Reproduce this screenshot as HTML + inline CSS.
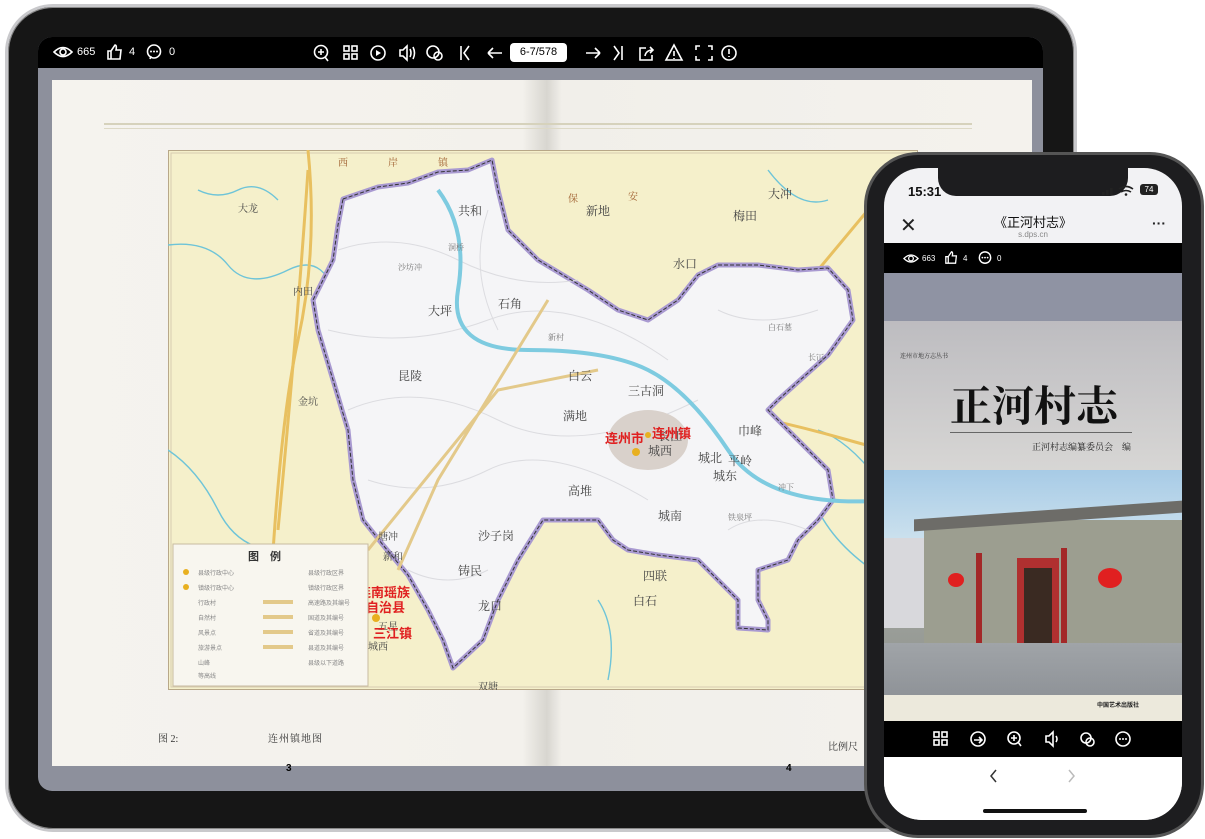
<!DOCTYPE html>
<html><head><meta charset="utf-8"><style>
*{margin:0;padding:0;box-sizing:border-box}
body{width:1205px;height:839px;background:#fff;position:relative;overflow:hidden;font-family:"Liberation Sans","Noto Sans CJK SC",sans-serif}
.abs{position:absolute}
.tb{left:5px;top:4px;width:1072px;height:828px;border-radius:48px;background:#161616;border:3px solid #c9c9cc;box-shadow:0 0 0 1px #888 inset}
.screen{left:38px;top:37px;width:1005px;height:754px;border-radius:14px;background:#8d909c;overflow:hidden}
.bar{left:0;top:0;width:100%;height:31px;background:#000;color:#fff;font-size:11px}
.page{left:14px;top:43px;width:980px;height:686px;background:linear-gradient(90deg,#f5f3ee 0%,#f3f1ec 48%,#d8d6d0 50.5%,#f1efea 52%,#f4f2ed 100%)}
.phone{left:864px;top:152px;width:340px;height:686px;border-radius:54px;background:#1d1d1f;border:3px solid #555}
.pscreen{left:884px;top:168px;width:298px;height:652px;border-radius:38px;overflow:hidden;background:#f2f2f4}
.ico{fill:none;stroke:#fff;stroke-width:1.6}
</style></head><body>
<div class="abs tb"></div>
<div class="abs screen">
 <div class="abs bar">
  <svg class="abs" style="left:15px;top:8px" width="20" height="14" viewBox="0 0 20 14"><path class="ico" d="M1 7Q10-2 19 7Q10 16 1 7Z"/><circle class="ico" cx="10" cy="7" r="3"/></svg>
  <span class="abs" style="left:39px;top:9px">665</span>
  <svg class="abs" style="left:69px;top:7px" width="16" height="16" viewBox="0 0 16 16"><path class="ico" d="M1 7h3v8H1zM4 7l4-6q2 0 1 5h5l-1 9H4"/></svg>
  <span class="abs" style="left:91px;top:9px">4</span>
  <svg class="abs" style="left:108px;top:7px" width="16" height="16" viewBox="0 0 16 16"><circle class="ico" cx="8" cy="7.5" r="6.5"/><path d="M4 15l1-3" class="ico"/><circle cx="5" cy="7.5" r="1" fill="#fff"/><circle cx="8" cy="7.5" r="1" fill="#fff"/><circle cx="11" cy="7.5" r="1" fill="#fff"/></svg>
  <span class="abs" style="left:131px;top:9px">0</span>
  <svg class="abs" style="left:274px;top:6px" width="440" height="20" viewBox="0 0 440 20">
   <circle class="ico" cx="9" cy="9" r="6.5"/><path class="ico" d="M6 9h6M9 6v6M13 14l3 4"/>
   <rect class="ico" x="32" y="3" width="5" height="5"/><rect class="ico" x="40" y="3" width="5" height="5"/><rect class="ico" x="32" y="11" width="5" height="5"/><rect class="ico" x="40" y="11" width="5" height="5"/>
   <circle class="ico" cx="66" cy="10" r="7"/><path d="M64 7v6l5-3z" fill="#fff"/>
   <path class="ico" d="M88 7h3l4-4v14l-4-4h-3zM98 6q2 4 0 8M101 4q3 6 0 12"/>
   <circle class="ico" cx="121" cy="9" r="6"/><circle class="ico" cx="126" cy="13" r="4"/>
   <path class="ico" d="M149 3v14M157 3l-5 7 5 7"/>
   <path class="ico" d="M176 10h14M176 10l5-5M176 10l5 5"/>
   <path class="ico" d="M274 10h14M288 10l-5-5M288 10l-5 5"/>
   <path class="ico" d="M302 3l5 7-5 7M310 3v14"/>
   <path class="ico" d="M334 5h-6v12h12v-5M333 13q1-6 8-6M338 4l3 3-3 3"/>
   <path class="ico" d="M362 2l8 15h-16zM362 8v5M362 15v1"/>
   <path class="ico" d="M384 7V3h4M396 3h4v4M400 13v4h-4M388 17h-4v-4"/>
   <circle class="ico" cx="417" cy="10" r="7"/><path class="ico" d="M417 6v5M417 13v1"/>
  </svg>
  <div class="abs" style="left:472px;top:6px;width:57px;height:19px;background:#fff;border-radius:4px;color:#000;font-size:11px;text-align:center;line-height:19px">6-7/578</div>
 </div>
 <div class="abs page">
  <div class="abs" style="left:52px;top:43px;width:868px;height:2px;background:#d6d2bc"></div>
  <div class="abs" style="left:52px;top:48px;width:868px;height:1px;background:#ddd9c6"></div>
  <svg class="abs" style="left:116px;top:70px" width="750" height="540" viewBox="0 0 750 540">
   <rect x="0" y="0" width="750" height="540" fill="#f5f0cb" stroke="#b8a888" stroke-width="2"/>
   <rect x="3" y="3" width="744" height="534" fill="none" stroke="#d8ccb0"/>
   <path d="M0 95 Q40 90 60 115 T120 120 T170 160 M30 40q20 10 40 0t40 10 M600 20q30 40 60 30 M590 300q40 20 60 60t70 70 M650 280q30 10 60 50 M0 300q30 20 50 60t60 40 M430 450q20 30 10 80" stroke="#6ec4d8" stroke-width="1.4" fill="none"/>
   <path d="M140 0q10 100-10 190t-30 300" stroke="#e8c060" stroke-width="3" fill="none"/>
   <path d="M455 240Q520 230 600 180L700 60 M550 260q60 10 130 30t70 10" stroke="#e8c060" stroke-width="3" fill="none"/>
   <polygon points="175,49 210,37 240,33 270,22 300,20 324,10 330,40 340,80 370,110 420,140 450,160 480,170 510,150 530,125 550,115 590,115 630,120 660,118 680,140 685,170 660,205 610,250 600,260 610,270 660,320 665,350 650,370 630,390 620,410 590,420 590,450 600,470 600,480 570,478 570,450 530,410 490,405 460,400 445,390 430,370 410,370 375,370 350,410 330,450 315,490 285,518 275,490 260,460 240,425 215,395 195,370 185,330 180,280 165,230 150,180 145,150 165,110 170,75" fill="#f5f5f7" stroke="#a99ad1" stroke-width="5" stroke-linejoin="round"/>
   <g stroke="#dcdce0" stroke-width="1" fill="none">
    <path d="M170 100q60-20 120 10t120 20M160 180q80 20 160-10t180 40M180 260q70-30 150 10t200-20M200 330q60 20 120-10t160 30M550 160q40 20 100 0M560 380q30-20 80 0M240 420q40 20 80 0M320 60q-20 60 10 120"/>
   </g>
   <polygon points="175,49 210,37 240,33 270,22 300,20 324,10 330,40 340,80 370,110 420,140 450,160 480,170 510,150 530,125 550,115 590,115 630,120 660,118 680,140 685,170 660,205 610,250 600,260 610,270 660,320 665,350 650,370 630,390 620,410 590,420 590,450 600,470 600,480 570,478 570,450 530,410 490,405 460,400 445,390 430,370 410,370 375,370 350,410 330,450 315,490 285,518 275,490 260,460 240,425 215,395 195,370 185,330 180,280 165,230 150,180 145,150 165,110 170,75" fill="none" stroke="#333" stroke-width="1" stroke-dasharray="4 2"/>
   <path d="M270 40q30 40 20 100t70 60 120 20 80 80 160 50" stroke="#7ecbe0" stroke-width="4" fill="none"/>
   <path d="M140 20q-10 150-30 360" stroke="#e8c060" stroke-width="3" fill="none"/>
   <path d="M380 150L270 330 230 420M200 400l130-160 100-20" stroke="#e3c98a" stroke-width="3" fill="none"/>
   <ellipse cx="480" cy="290" rx="40" ry="30" fill="#d9d1cb"/>
   <g font-family="Liberation Serif,'Noto Serif CJK SC',serif" font-size="10" fill="#444">
    <text x="70" y="62">大龙</text><text x="125" y="145">内田</text><text x="130" y="255">金坑</text>
    <text x="290" y="65" font-size="12">共和</text><text x="330" y="158" font-size="12">石角</text><text x="260" y="165" font-size="12">大坪</text>
    <text x="230" y="230" font-size="12">昆陵</text><text x="400" y="230" font-size="12">白云</text><text x="395" y="270" font-size="12">满地</text>
    <text x="460" y="245" font-size="12">三古洞</text><text x="490" y="290" font-size="12">长江</text><text x="570" y="285" font-size="12">巾峰</text>
    <text x="530" y="312" font-size="12">城北</text><text x="560" y="315" font-size="12">平岭</text><text x="480" y="305" font-size="12">城西</text>
    <text x="545" y="330" font-size="12">城东</text><text x="400" y="345" font-size="12">高堆</text><text x="490" y="370" font-size="12">城南</text>
    <text x="475" y="430" font-size="12">四联</text><text x="465" y="455" font-size="12">白石</text><text x="310" y="460" font-size="12">龙口</text>
    <text x="310" y="390" font-size="12">沙子岗</text><text x="290" y="425" font-size="12">铸民</text><text x="210" y="390">塘冲</text><text x="215" y="410">新和</text>
    <text x="200" y="500">城西</text><text x="210" y="480">五星</text><text x="505" y="118" font-size="12">水口</text><text x="565" y="70" font-size="12">梅田</text>
    <text x="600" y="48" font-size="12">大冲</text><text x="418" y="65" font-size="12">新地</text><text x="310" y="540">双塘</text><text x="460" y="50" fill="#a06030">安</text><text x="400" y="52" fill="#a06030">保</text>
    <text x="170" y="16" fill="#a06030">西</text><text x="220" y="16" fill="#a06030">岸</text><text x="270" y="16" fill="#a06030">镇</text>
    <text x="640" y="210" font-size="8" fill="#777">长冚</text><text x="600" y="180" font-size="8" fill="#777">白石墓</text><text x="380" y="190" font-size="8" fill="#777">新村</text><text x="230" y="120" font-size="8" fill="#777">沙坊冲</text><text x="280" y="100" font-size="8" fill="#777">洞桥</text><text x="560" y="370" font-size="8" fill="#777">铁泉坪</text><text x="610" y="340" font-size="8" fill="#777">冲下</text><text x="700" y="290" font-size="12">青石</text>
   </g>
   <g font-weight="bold" fill="#e02020" font-size="13" font-family="Liberation Sans,'Noto Sans CJK SC',sans-serif">
    <text x="437" y="293">连州市</text><text x="484" y="288">连州镇</text><text x="190" y="447">连南瑶族</text><text x="198" y="462">自治县</text><text x="205" y="488">三江镇</text>
   </g>
   <circle cx="480" cy="285" r="3" fill="#e8b020"/><circle cx="468" cy="302" r="4" fill="#e8b020"/><circle cx="208" cy="468" r="4" fill="#e8b020"/>
   <rect x="5" y="394" width="195" height="142" fill="#f8f6ef" stroke="#c8bba0"/>
   <text x="80" y="410" font-size="11" font-weight="bold" fill="#333">图　例</text>
   <g fill="#888" font-size="6"><text x="30" y="425">县级行政中心</text><text x="30" y="440">镇级行政中心</text><text x="30" y="455">行政村</text><text x="30" y="470">自然村</text><text x="30" y="485">风景点</text><text x="30" y="500">旅游景点</text><text x="30" y="515">山峰</text><text x="30" y="528">等高线</text>
   <text x="140" y="425">县级行政区界</text><text x="140" y="440">镇级行政区界</text><text x="140" y="455">高速路及其编号</text><text x="140" y="470">国道及其编号</text><text x="140" y="485">省道及其编号</text><text x="140" y="500">县道及其编号</text><text x="140" y="515">县级以下道路</text></g>
   <g fill="#e8b020"><circle cx="18" cy="422" r="3"/><circle cx="18" cy="437" r="3"/></g>
   <g stroke="#e3c98a" stroke-width="4"><path d="M95 452h30M95 467h30M95 482h30M95 497h30"/></g>
  </svg>
  <div class="abs" style="left:106px;top:650px;font-size:10px;color:#333;font-family:'Liberation Serif','Noto Serif CJK SC',serif">图 2:</div>
  <div class="abs" style="left:216px;top:650px;font-size:10px;color:#333;letter-spacing:1px;font-family:'Liberation Serif','Noto Serif CJK SC',serif">连州镇地图</div>
  <div class="abs" style="left:776px;top:658px;font-size:10px;color:#333;font-family:'Liberation Serif','Noto Serif CJK SC',serif">比例尺</div>
  <div class="abs" style="left:234px;top:683px;font-size:10px;font-weight:bold">3</div>
  <div class="abs" style="left:734px;top:683px;font-size:10px;font-weight:bold">4</div>
 </div>
</div>
<div class="abs phone"></div>
<div class="abs pscreen">
 <div class="abs" style="left:54px;top:0;width:190px;height:28px;background:#1d1d1f;border-radius:0 0 18px 18px"></div>
 <div class="abs" style="left:24px;top:16px;font-size:13px;font-weight:bold;color:#111">15:31</div>
 <div class="abs" style="left:256px;top:16px;width:18px;height:11px;background:#222;border-radius:3px;color:#fff;font-size:8px;text-align:center;line-height:11px">74</div>
 <svg class="abs" style="left:218px;top:17px" width="34" height="11"><rect x="0" y="7" width="2.5" height="3" fill="#222"/><rect x="4" y="5" width="2.5" height="5" fill="#222"/><rect x="8" y="3" width="2.5" height="7" fill="#222"/><path d="M17 4q7-5 14 0M19 7q5-3 10 0" stroke="#222" stroke-width="1.6" fill="none"/><circle cx="24" cy="9.5" r="1.3" fill="#222"/></svg>
 <div class="abs" style="left:16px;top:50px;font-size:20px;color:#222;line-height:16px">✕</div>
 <div class="abs" style="left:0;top:44px;width:298px;text-align:center;font-size:13px;color:#111">《正河村志》</div>
 <div class="abs" style="left:0;top:62px;width:298px;text-align:center;font-size:8px;color:#888">s.dps.cn</div>
 <div class="abs" style="left:268px;top:47px;font-size:14px;color:#222;font-weight:bold">···</div>
 <div class="abs" style="left:0;top:75px;width:298px;height:30px;background:#000;color:#fff;font-size:8px">
  <svg class="abs" style="left:19px;top:10px" width="16" height="11" viewBox="0 0 20 14"><path class="ico" d="M1 7Q10-2 19 7Q10 16 1 7Z"/><circle class="ico" cx="10" cy="7" r="3"/></svg>
  <span class="abs" style="left:38px;top:11px">663</span>
  <svg class="abs" style="left:61px;top:8px" width="13" height="13" viewBox="0 0 16 16"><path class="ico" d="M1 7h3v8H1zM4 7l4-6q2 0 1 5h5l-1 9H4"/></svg>
  <span class="abs" style="left:79px;top:11px">4</span>
  <svg class="abs" style="left:94px;top:8px" width="14" height="14" viewBox="0 0 16 16"><circle class="ico" cx="8" cy="7.5" r="6.5"/><circle cx="5" cy="7.5" r="1" fill="#fff"/><circle cx="8" cy="7.5" r="1" fill="#fff"/><circle cx="11" cy="7.5" r="1" fill="#fff"/></svg>
  <span class="abs" style="left:113px;top:11px">0</span>
 </div>
 <div class="abs" style="left:0;top:105px;width:298px;height:48px;background:#8f93a3"></div>
 <div class="abs" style="left:0;top:153px;width:298px;height:400px;background:linear-gradient(#bdbcc0,#d9d8d6 40%,#ebe9e2 100%)"></div>
 <div class="abs" style="left:16px;top:183px;font-size:6px;color:#333;font-family:'Liberation Serif','Noto Serif CJK SC',serif">连州市地方志丛书</div>
 <div class="abs" style="left:66px;top:212px;font-size:42px;font-weight:bold;color:#111;font-family:'Noto Serif CJK SC',serif;line-height:48px">正河村志</div>
 <div class="abs" style="left:66px;top:264px;width:182px;height:1px;background:#666"></div>
 <div class="abs" style="left:148px;top:272px;font-size:9px;color:#222;font-family:'Noto Serif CJK SC',serif">正河村志编纂委员会　编</div>
 <div class="abs" style="left:0;top:302px;width:298px;height:225px;background:linear-gradient(#a7cbe6,#d6e7f0 40%,#9ea29b 60%,#8e918f 100%)"></div>
 <div class="abs" style="left:40px;top:352px;width:258px;height:128px;background:#9c9e90"></div>
 <div class="abs" style="left:30px;top:342px;width:268px;height:12px;background:#6d6c68;transform:skewY(-4deg)"></div>
 <div class="abs" style="left:0;top:370px;width:40px;height:90px;background:#d8d8dc"></div>
 <div class="abs" style="left:133px;top:390px;width:42px;height:88px;background:#b03030"></div>
 <div class="abs" style="left:140px;top:400px;width:28px;height:78px;background:#3a2a22"></div>
 <div class="abs" style="left:92px;top:385px;width:6px;height:92px;background:#a32828"></div>
 <div class="abs" style="left:177px;top:380px;width:6px;height:98px;background:#a32828"></div>
 <div class="abs" style="left:64px;top:405px;width:16px;height:14px;border-radius:50%;background:#e02020"></div>
 <div class="abs" style="left:214px;top:400px;width:24px;height:20px;border-radius:50%;background:#e02020"></div>
 <div class="abs" style="left:0;top:475px;width:298px;height:52px;background:linear-gradient(#a0a4a8,#8f9398)"></div>
 <div class="abs" style="left:0;top:527px;width:298px;height:26px;background:#ece9dc"></div>
 <div class="abs" style="left:213px;top:532px;font-size:6px;font-weight:bold;color:#222">中国艺术出版社</div>
 <div class="abs" style="left:0;top:553px;width:298px;height:36px;background:#000"></div>
 <svg class="abs" style="left:48px;top:561px" width="200" height="20" viewBox="0 0 200 20">
  <rect class="ico" x="2" y="3" width="5" height="5"/><rect class="ico" x="10" y="3" width="5" height="5"/><rect class="ico" x="2" y="11" width="5" height="5"/><rect class="ico" x="10" y="11" width="5" height="5"/>
  <circle class="ico" cx="46" cy="10" r="7"/><path class="ico" d="M42 11h7M47 8l3 3-3 3"/>
  <circle class="ico" cx="82" cy="9" r="6"/><path class="ico" d="M79 9h6M82 6v6M86 13l3 4"/>
  <path class="ico" d="M114 7h3l4-4v14l-4-4h-3zM124 7q2 3 0 6"/>
  <circle class="ico" cx="154" cy="9" r="5"/><circle class="ico" cx="158" cy="13" r="4"/>
  <circle class="ico" cx="191" cy="10" r="7"/><circle cx="188" cy="10" r="1" fill="#fff"/><circle cx="191" cy="10" r="1" fill="#fff"/><circle cx="194" cy="10" r="1" fill="#fff"/>
 </svg>
 <div class="abs" style="left:0;top:589px;width:298px;height:63px;background:#fff"></div>
 <svg class="abs" style="left:104px;top:601px" width="90" height="14"><path d="M8 1L3 7l5 6" stroke="#333" stroke-width="1.5" fill="none"/><path d="M81 1l5 6-5 6" stroke="#bbb" stroke-width="1.5" fill="none"/></svg>
 <div class="abs" style="left:99px;top:641px;width:104px;height:4px;border-radius:2px;background:#111"></div>
</div>
</body></html>
